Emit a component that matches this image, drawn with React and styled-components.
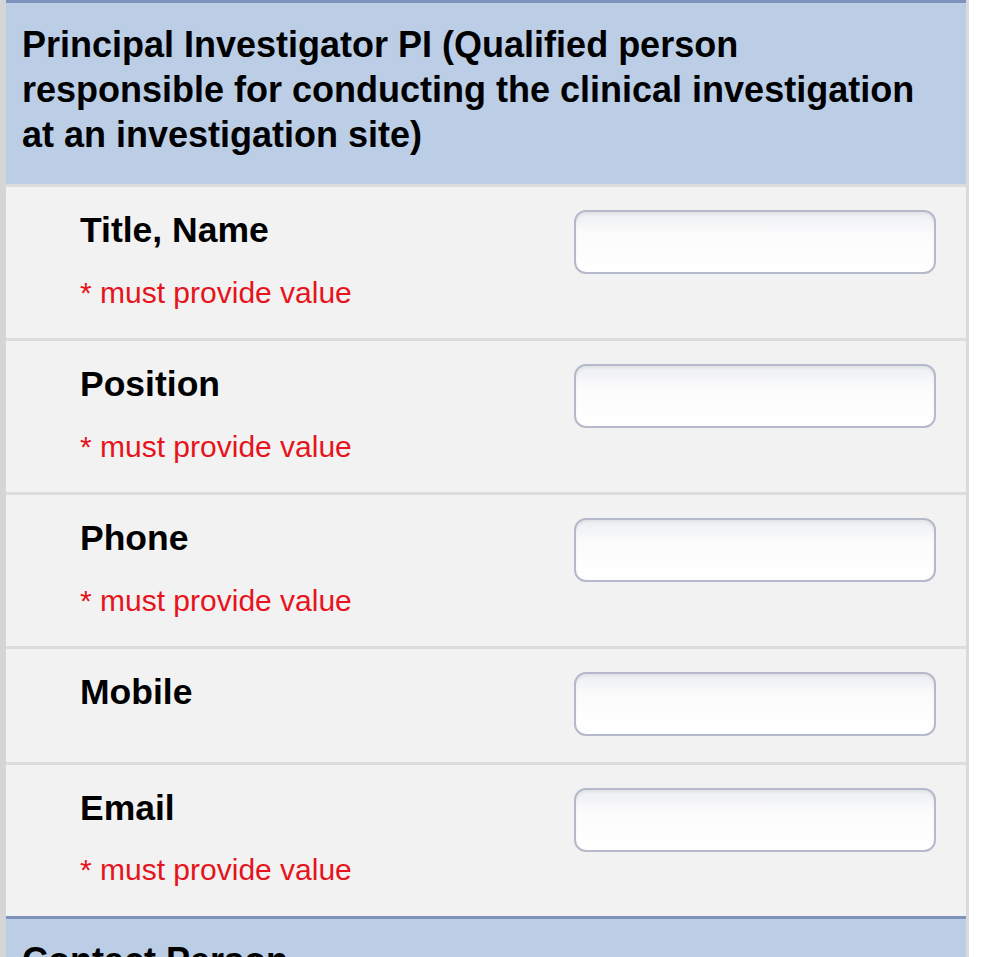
import React from 'react';
import styled, { createGlobalStyle } from 'styled-components';

const GlobalStyle = createGlobalStyle`
  html, body {
    margin: 0;
    padding: 0;
    background: #ffffff;
  }
  body {
    font-family: "Liberation Sans", Arial, sans-serif;
    overflow: hidden;
  }
`;

const fields = [
  { label: 'Title, Name', required: true },
  { label: 'Position', required: true },
  { label: 'Phone', required: true },
  { label: 'Mobile', required: false },
  { label: 'Email', required: true },
];

function App() {
  return (
    <>
      <GlobalStyle />
      <Form>
        <SectionHeader>
          Principal Investigator PI (Qualified person responsible for conducting the clinical investigation at an investigation site)
        </SectionHeader>
        {fields.map((f) => (
          <FieldRow key={f.label}>
            <LabelCol>
              <Label>{f.label}</Label>
              {f.required && <Error>* must provide value</Error>}
            </LabelCol>
            <TextInput type="text" />
          </FieldRow>
        ))}
        <SectionHeader $next>Contact Person</SectionHeader>
      </Form>
    </>
  );
}

export default App;

const Form = styled.div`
  width: 960px;
  border-left: 6px solid #d5d5d5;
  border-right: 3px solid #dadada;
`;

const SectionHeader = styled.div`
  background: #bbcee6;
  border-top: 3px solid #7d93bb;
  padding: 19px 38px 27px 16px;
  font-size: 36px;
  line-height: 45px;
  font-weight: bold;
  color: #000;
  border-bottom: ${(p) => (p.$next ? 'none' : '3px solid #dcdcdc')};
`;

const FieldRow = styled.div`
  display: flex;
  align-items: flex-start;
  background: #f2f2f2;
  padding: 23px 30px 25.5px 74px;
  border-bottom: 3px solid #dcdcdc;
  &:nth-last-child(2) {
    border-bottom: none;
  }
`;

const LabelCol = styled.div`
  flex: 1;
  display: flex;
  flex-direction: column;
  gap: 25.5px;
`;

const Label = styled.div`
  font-size: 35.5px;
  line-height: 40px;
  font-weight: bold;
  color: #000;
`;

const Error = styled.div`
  font-size: 30px;
  line-height: 34px;
  color: #e6141c;
  padding-bottom: 3px;
`;

const TextInput = styled.input`
  box-sizing: border-box;
  width: 362px;
  height: 64px;
  margin-top: 0;
  border: 2px solid #b5b9c9;
  border-radius: 12px;
  background: linear-gradient(#eceef2 0%, #fbfbfc 35%, #ffffff 100%);
  box-shadow: inset 0 2px 3px rgba(0, 0, 0, 0.05);
  outline: none;
  font-size: 30px;
`;
